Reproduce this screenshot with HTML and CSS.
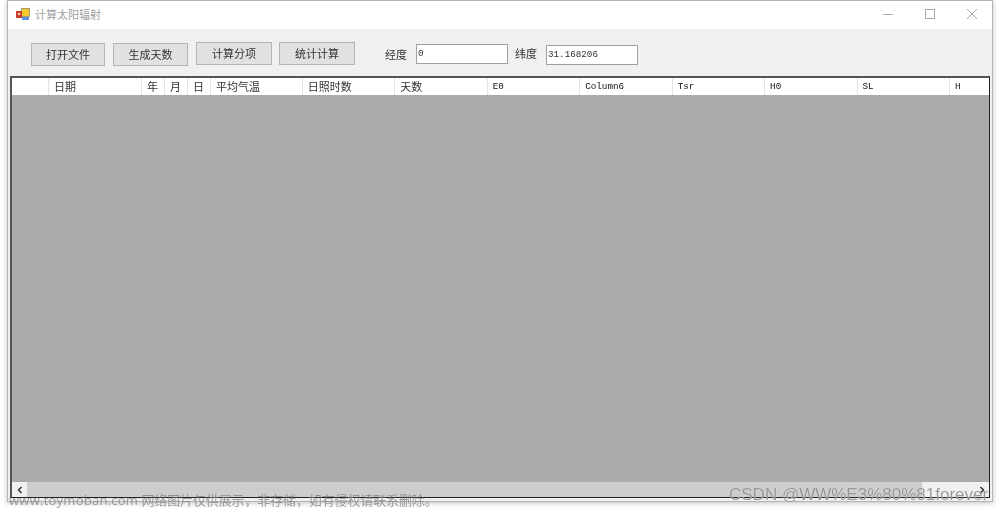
FILE: index.html
```html
<!doctype html>
<html lang="en">
<head>
	<meta charset="UTF-8">
	<title>计算太阳辐射</title>
	<link rel="stylesheet" href="styles.css">
</head>
<body>

	<div class="shot">
		<div class="window">

			<div class="titleBar">
				<svg class="appIcon" width="14" height="13" viewBox="0 0 14 13">
					<rect x="5.5" y="0.5" width="8" height="8" fill="#f4c92e" stroke="#a89a6a"/>
					<rect x="0" y="3" width="6" height="7" fill="#c9402f"/>
					<rect x="2" y="5" width="2" height="2" fill="#f0d8c8"/>
					<rect x="6" y="9" width="7" height="3" fill="#5b8fdc"/>
				</svg>
				<span class="titleText">计算太阳辐射</span>
				<div class="winButtons">
					<svg width="10" height="10" viewBox="0 0 10 10"><path d="M0 5.5h10" stroke="#aaa" fill="none"/></svg>
					<svg width="10" height="10" viewBox="0 0 10 10"><rect x="0.5" y="0.5" width="9" height="9" stroke="#aaa" fill="none"/></svg>
					<svg width="10" height="10" viewBox="0 0 10 10"><path d="M0 0l10 10M10 0L0 10" stroke="#aaa" fill="none"/></svg>
				</div>
			</div>

			<div class="toolBar">
				<button class="btn btnA">打开文件</button>
				<button class="btn btnB">生成天数</button>
				<button class="btn btnC">计算分项</button>
				<button class="btn btnD">统计计算</button>
				<label class="fieldLabel labelA">经度</label>
				<input class="field fieldA" type="text" value="0">
				<label class="fieldLabel labelB">纬度</label>
				<input class="field fieldB" type="text" value="31.168206">
			</div>

			<div class="grid">
				<div class="gridHead">
					<div class="col c0"></div>
					<div class="col c1">日期</div>
					<div class="col c2">年</div>
					<div class="col c3">月</div>
					<div class="col c3">日</div>
					<div class="col c4">平均气温</div>
					<div class="col c5">日照时数</div>
					<div class="col c5">天数</div>
					<div class="col c5 mono">E0</div>
					<div class="col c5 mono">Column6</div>
					<div class="col c5 mono">Tsr</div>
					<div class="col c5 mono">H0</div>
					<div class="col c5 mono">SL</div>
					<div class="col c6 mono">H</div>
				</div>
				<div class="gridBody"></div>
				<div class="scrollBar">
					<span class="arrow">
						<svg width="8" height="8" viewBox="0 0 8 8"><path d="M5.5 1L2.5 4l3 3" stroke="#333" stroke-width="1.5" fill="none"/></svg>
					</span>
					<span class="thumb"></span>
					<span class="arrow">
						<svg width="8" height="8" viewBox="0 0 8 8"><path d="M2.5 1l3 3-3 3" stroke="#333" stroke-width="1.5" fill="none"/></svg>
					</span>
				</div>
			</div>

		</div>

		<div class="markLeft"><span class="markLatin">www.toymoban.com</span> <span class="markCjk">网络图片仅供展示，非存储，如有侵权请联系删除。</span></div>
		<div class="markRight">CSDN @WW%E3%80%81forever</div>
	</div>

</body>
</html>
```

FILE: styles.css
```css
html, body {
	height: 100%;
	margin: 0px;
	padding: 0px;
	background-color: #fff;
}

.shot {
	position: relative;
	width: 1000px;
	height: 509px;
	overflow: hidden;
	font-family: "Noto Sans CJK SC", "Liberation Sans", sans-serif;
}

/* the window stops short of the picture on every side but the top */
.window {
	box-sizing: border-box;
	width: 986px;
	height: 502px;
	margin-left: 7px;
	display: flex;
	flex-direction: column;
	background-color: #f0f0f0;
	border: 1px solid #b4b4b4;
	box-shadow: 0 1px 5px rgba(0, 0, 0, 0.25);
	filter: blur(0.3px);
}

.titleBar {
	height: 28px;
	flex: none;
	display: flex;
	align-items: center;
	padding-left: 8px;
	padding-bottom: 2px;
	box-sizing: border-box;
	background-color: #fff;
}
.appIcon {
	margin-right: 5px;
}
.titleText {
	font-size: 11px;
	color: #a0a0a0;
}
.winButtons {
	margin-left: auto;
	display: flex;
	gap: 32px;
	padding-right: 15px;
}

.toolBar {
	height: 47px;
	flex: none;
	display: flex;
	align-items: center;
}
.btn {
	height: 23px;
	padding: 0 0 2px 0;
	font-family: inherit;
	font-size: 11px;
	color: #333;
	background-color: #e1e1e1;
	border: 1px solid #b4b4b4;
}
.btnA { width: 74px; margin-left: 23px; margin-top: 4px; }
.btnB { width: 75px; margin-left: 8px; margin-top: 4px; }
.btnC { width: 76px; margin-left: 8px; margin-top: 2px; }
.btnD { width: 76px; margin-left: 7px; margin-top: 2px; }

.fieldLabel {
	font-size: 11px;
	color: #333;
}
.labelA { margin-left: 30px; margin-top: 3px; }
.labelB { margin-left: 7px; margin-top: 1px; }

.field {
	box-sizing: border-box;
	width: 92px;
	height: 20px;
	margin-left: 9px;
	padding: 0 1px;
	font-family: "Liberation Mono", monospace;
	font-size: 9.25px;
	color: #333;
	background-color: #fff;
	border: 1px solid #a0a0a0;
}
.fieldA { margin-top: 2px; }
.fieldB { margin-top: 4px; }

.grid {
	box-sizing: border-box;
	flex: 1;
	min-height: 0;
	width: 980px;
	margin: 0 0 3px 2px;
	display: flex;
	flex-direction: column;
	border: 1px solid #222;
	border-top: 2px solid #555;
	border-left: 2px solid #555;
}
.gridHead {
	height: 17px;
	flex: none;
	display: flex;
	background-color: #fff;
	font-size: 11px;
	line-height: 17px;
	color: #333;
}
.col {
	box-sizing: border-box;
	padding-left: 5px;
	border-right: 1px solid #e4e4e4;
	white-space: nowrap;
	overflow: hidden;
}
.mono {
	font-family: "Liberation Mono", monospace;
	font-size: 9.25px;
	color: #111;
}
.c0 { width: 37px; }
.c1 { width: 93px; }
.c2 { width: 23px; }
.c3 { width: 23px; }
.c4 { width: 92px; }
.c5 { width: 92.5px; }
.c6 { width: 39px; border-right: 0; }

.gridBody {
	flex: 1;
	background-color: #ababab;
}

.scrollBar {
	height: 15px;
	flex: none;
	display: flex;
	background-color: #f0f0f0;
}
.arrow {
	width: 15px;
	flex: none;
	display: flex;
	align-items: center;
	justify-content: center;
}
.thumb {
	width: 895px;
	background-color: #cdcdcd;
}
.scrollBar .arrow:last-child {
	margin-left: auto;
}

/* watermarks sit over the bottom edge of the window */
.markLeft {
	position: absolute;
	left: 9px;
	top: 491px;
	font-size: 13px;
	line-height: 18px;
	color: rgba(120, 120, 120, 0.7);
	font-family: "Open Sans", "Noto Sans CJK SC", sans-serif;
	white-space: nowrap;
}
.markLatin {
	letter-spacing: 0.25px;
}
.markCjk {
	letter-spacing: -0.13px;
}
.markRight {
	position: absolute;
	left: 729px;
	top: 484px;
	font-family: "Liberation Sans", sans-serif;
	font-size: 17px;
	line-height: 22px;
	color: rgba(120, 120, 120, 0.75);
	text-shadow: 0 0 1px rgba(255, 255, 255, 0.8);
	white-space: nowrap;
}
```
